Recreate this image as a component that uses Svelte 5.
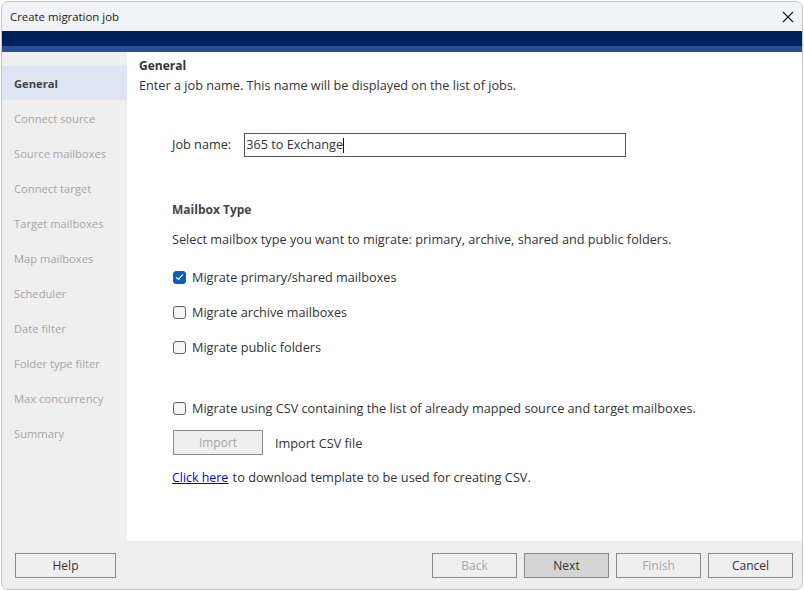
<script>
  const steps = [
    'General',
    'Connect source',
    'Source mailboxes',
    'Connect target',
    'Target mailboxes',
    'Map mailboxes',
    'Scheduler',
    'Date filter',
    'Folder type filter',
    'Max concurrency',
    'Summary'
  ];

  const mailboxOptions = [
    { label: 'Migrate primary/shared mailboxes', checked: true },
    { label: 'Migrate archive mailboxes', checked: false },
    { label: 'Migrate public folders', checked: false }
  ];
</script>

<div class="page">
  <div class="window">
    <header class="titlebar">
      <span>Create migration job</span>
      <svg class="close" width="12" height="12" viewBox="0 0 12 12">
        <path d="M1 1 L11 11 M11 1 L1 11" stroke="#1a1a1a" stroke-width="1.1" fill="none" />
      </svg>
    </header>
    <div class="banner"></div>

    <div class="body">
      <nav class="steps">
        {#each steps as step, i}
          <div class="step" class:active={i === 0}>{step}</div>
        {/each}
      </nav>

      <main class="content">
        <h1>General</h1>
        <p class="intro">Enter a job name. This name will be displayed on the list of jobs.</p>

        <div class="form">
          <div class="job-row">
            <span class="job-label">Job name:</span>
            <div class="input"><span>365 to Exchange</span><i class="caret"></i></div>
          </div>

          <h2>Mailbox Type</h2>
          <p class="hint">Select mailbox type you want to migrate: primary, archive, shared and public folders.</p>

          <div class="options">
            {#each mailboxOptions as opt}
              <div class="check-row">
                <span class="box" class:checked={opt.checked}>
                  {#if opt.checked}
                    <svg width="9" height="8" viewBox="0 0 9 8">
                      <path d="M1 4.2 L3.3 6.4 L8 1.4" stroke="#fff" stroke-width="1.1" fill="none" />
                    </svg>
                  {/if}
                </span>
                <span>{opt.label}</span>
              </div>
            {/each}
          </div>

          <div class="check-row csv">
            <span class="box"></span>
            <span>Migrate using CSV containing the list of already mapped source and target mailboxes.</span>
          </div>

          <div class="import-row">
            <button class="btn import" disabled>Import</button>
            <span>Import CSV file</span>
          </div>

          <p class="template"><a href="#top">Click here</a> <span>to download template to be used for creating CSV.</span></p>
        </div>
      </main>
    </div>

    <footer class="footer">
      <button class="btn help">Help</button>
      <div class="nav-buttons">
        <button class="btn" disabled>Back</button>
        <button class="btn primary">Next</button>
        <button class="btn" disabled>Finish</button>
        <button class="btn">Cancel</button>
      </div>
    </footer>
  </div>
</div>

<style>
  :global(body) {
    margin: 0;
    background: #fff;
  }

  .page {
    width: 804px;
    height: 591px;
    padding: 1px;
    box-sizing: border-box;
    font-family: "Open Sans", "Noto Sans", sans-serif;
    font-size: 12.7px;
    color: #333;
  }

  .window {
    width: 802px;
    height: 589px;
    box-sizing: border-box;
    border: 1px solid #c4c4c4;
    border-radius: 7px;
    overflow: hidden;
    display: flex;
    flex-direction: column;
    background: #efefef;
  }

  .titlebar {
    height: 29px;
    flex: none;
    background: #f1f2f6;
    display: flex;
    align-items: center;
    justify-content: space-between;
    padding: 0 8px;
    color: #1a1a1a;
    font-size: 11.4px;
  }

  .banner {
    height: 21px;
    flex: none;
    box-sizing: border-box;
    background: #00205b;
    border-bottom: 6px solid #264f97;
  }

  .body {
    flex: 1;
    display: flex;
    min-height: 0;
  }

  .steps {
    width: 125px;
    flex: none;
    padding-top: 14px;
    background: #efefef;
    font-size: 11.2px;
  }

  .step {
    height: 35px;
    line-height: 36px;
    padding-left: 12px;
    color: #a6a6a6;
  }

  .step.active {
    height: 34px;
    margin-bottom: 1px;
    background: #dce6f3;
    color: #444;
    font-weight: 700;
  }

  .content {
    flex: 1;
    background: #fff;
    padding: 5px 0 0 12px;
  }

  h1 {
    margin: 0;
    font-size: 12px;
    line-height: 17px;
    font-weight: 700;
    color: #333;
  }

  .intro {
    margin: 2px 0 0;
    line-height: 18px;
  }

  .form {
    padding: 39px 0 0 33px;
  }

  .job-row {
    display: flex;
    align-items: center;
    gap: 13px;
    height: 24px;
  }

  .job-label {
    padding-bottom: 2px;
  }

  .input {
    width: 382px;
    height: 24px;
    box-sizing: border-box;
    border: 1px solid #555;
    display: flex;
    align-items: center;
    padding: 0 0 2px 1px;
    color: #333;
  }

  .caret {
    width: 1px;
    height: 15px;
    margin-top: 2px;
    background: #111;
  }

  h2 {
    margin: 44px 0 0;
    font-size: 12px;
    line-height: 18px;
    font-weight: 700;
    color: #444;
  }

  .hint {
    margin: 11px 0 0;
    line-height: 18px;
  }

  .options {
    margin-top: 20px;
    display: flex;
    flex-direction: column;
    gap: 17px;
  }

  .check-row {
    display: flex;
    align-items: center;
    gap: 6px;
    height: 18px;
  }

  .box {
    width: 13px;
    height: 13px;
    margin-left: 1px;
    box-sizing: border-box;
    border: 1px solid #5f5f5f;
    border-radius: 3px;
    background: #f6f6f6;
    display: flex;
    align-items: center;
    justify-content: center;
    flex: none;
  }

  .box.checked {
    background: #0a5cbd;
    border-color: #0a5cbd;
  }

  .csv {
    margin-top: 43px;
  }

  .import-row {
    display: flex;
    align-items: center;
    gap: 12px;
    margin: 13px 0 0 1px;
  }

  .btn {
    width: 101px;
    height: 25px;
    box-sizing: border-box;
    border: 1px solid #8a8a8a;
    background: #efefef;
    font-family: inherit;
    font-size: 12px;
    color: #333;
    padding: 0;
  }

  .btn:disabled {
    color: #a6a6a6;
  }

  .btn.import {
    width: 90px;
  }

  .btn.primary {
    background: #d5d5d5;
  }

  .template {
    margin: 13px 0 0;
    line-height: 18px;
  }

  .template a {
    color: #0000ee;
    text-decoration: underline;
    font-size: 12.4px;
  }

  .template span {
    margin-left: 1px;
    font-size: 12.75px;
  }

  .footer {
    height: 48px;
    flex: none;
    display: flex;
    justify-content: space-between;
    padding: 12px 9px 0 13px;
    box-sizing: border-box;
  }

  .nav-buttons {
    display: flex;
    gap: 7px;
  }

  .nav-buttons .btn {
    width: 85px;
  }
</style>
